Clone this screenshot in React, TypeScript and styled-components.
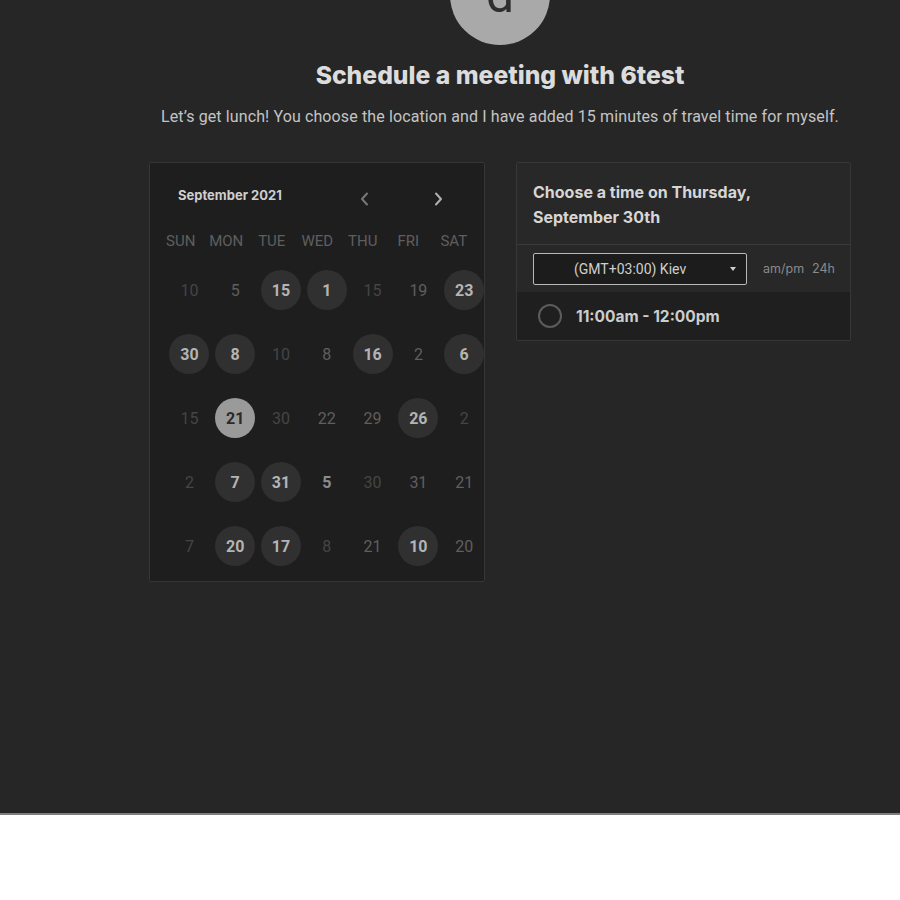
import React from "react";
import styled, { createGlobalStyle } from "styled-components";

const Global = createGlobalStyle`
  html, body { margin: 0; padding: 0; background: #ffffff; }
  body { font-family: Roboto, "Liberation Sans", sans-serif; }
  * { box-sizing: border-box; }
`;

const Page = styled.div`
  height: 815px;
  background: #262626;
  border-bottom: 2px solid #7d7d7d;
  overflow: hidden;
  padding-left: 100px;
  display: flex;
  flex-direction: column;
  align-items: center;
`;

const Avatar = styled.div`
  width: 100px;
  height: 100px;
  margin-top: -55px;
  border-radius: 50%;
  background: #a9a9a9;
  color: #2e2e2e;
  font-family: Roboto, "Liberation Sans", sans-serif;
  font-size: 50px;
  line-height: 100px;
  text-align: center;
  flex-shrink: 0;
`;

const Title = styled.h1`
  margin: 15px 0 0;
  font-family: Inter, "Liberation Sans", sans-serif;
  font-weight: 800;
  font-size: 24.7px;
  line-height: 30px;
  color: #dcdcdc;
`;

const Subtitle = styled.p`
  margin: 17px 0 0;
  font-size: 16px;
  letter-spacing: 0.12px;
  line-height: 20px;
  color: #c4c4c4;
`;

const Panels = styled.div`
  margin-top: 35px;
  display: flex;
  gap: 31px;
  align-items: flex-start;
`;

const Calendar = styled.div`
  width: 336px;
  height: 420px;
  background: #1e1e1e;
  border: 1px solid #363636;
  border-radius: 2px;
  overflow: hidden;
`;

const CalHeader = styled.div`
  display: flex;
  align-items: center;
  height: 20px;
  margin-top: 22px;
  padding-left: 28px;
`;

const Month = styled.div`
  font-family: Inter, "Liberation Sans", sans-serif;
  font-weight: 700;
  font-size: 13px;
  color: #cfcfcf;
  width: 176px;
`;

const NavBtn = styled.button<{ $dim?: boolean }>`
  background: none;
  border: none;
  padding: 0;
  margin-top: 8px;
  width: 14px;
  height: 16px;
  display: flex;
  align-items: center;
  justify-content: center;
  color: ${(p) => (p.$dim ? "#777" : "#b0b0b0")};
  margin-left: ${(p) => (p.$dim ? "3px" : "60px")};
`;

const WeekRow = styled.div`
  display: grid;
  grid-template-columns: repeat(7, 45.5px);
  padding-left: 8px;
  margin-top: 26px;
  height: 20px;
`;

const WeekDay = styled.div`
  text-align: center;
  font-size: 15px;
  line-height: 20px;
  color: #5e5e5e;
`;

const DaysGrid = styled.div`
  display: grid;
  grid-template-columns: repeat(7, 45.8px);
  grid-auto-rows: 64px;
  padding-left: 16.5px;
  margin-top: 7px;
`;

const DayCell = styled.div`
  display: flex;
  align-items: center;
  justify-content: center;
`;

type Kind = "dim" | "mid" | "strong" | "avail" | "sel";

const Day = styled.div<{ $k: Kind }>`
  width: 40px;
  height: 40px;
  border-radius: 50%;
  display: flex;
  align-items: center;
  justify-content: center;
  font-size: 16px;
  font-weight: ${(p) => (p.$k === "avail" || p.$k === "sel" || p.$k === "strong" ? 700 : 400)};
  background: ${(p) => (p.$k === "avail" ? "#303030" : p.$k === "sel" ? "#9a9a9a" : "transparent")};
  color: ${(p) =>
    p.$k === "dim"
      ? "#454545"
      : p.$k === "mid"
      ? "#5f5f5f"
      : p.$k === "strong"
      ? "#8c8c8c"
      : p.$k === "sel"
      ? "#2a2a2a"
      : "#b4b4b4"};
`;

const TimePanel = styled.div`
  width: 335px;
  background: #282828;
  border: 1px solid #373737;
  border-radius: 2px;
  overflow: hidden;
`;

const TimeHeader = styled.div`
  padding: 17px 16px 14px;
  font-family: Inter, "Liberation Sans", sans-serif;
  font-weight: 700;
  font-size: 16px;
  line-height: 25px;
  color: #d6d6d6;
  border-bottom: 1px solid #3a3a3a;
`;

const ZoneRow = styled.div`
  display: flex;
  align-items: center;
  height: 47px;
  padding-left: 16px;
  gap: 16px;
`;

const Select = styled.div`
  width: 214px;
  height: 32px;
  border: 1px solid #b8b8b8;
  border-radius: 2px;
  background: #1c1c1c;
  display: flex;
  align-items: center;
  padding-left: 40px;
  padding-right: 10px;
  font-size: 14px;
  color: #cfcfcf;
`;

const SelectText = styled.span`
  flex: 1;
`;

const Caret = styled.span`
  width: 0;
  height: 0;
  border-left: 3.5px solid transparent;
  border-right: 3.5px solid transparent;
  border-top: 4px solid #cfcfcf;
`;

const Format = styled.div`
  font-family: Inter, "Liberation Sans", sans-serif;
  font-size: 12.5px;
  color: #8a8a8a;
  display: flex;
  gap: 8px;
`;

const SlotRow = styled.div`
  display: flex;
  align-items: center;
  height: 48px;
  background: #1f1f1f;
  padding-left: 21px;
  gap: 14px;
`;

const Radio = styled.div`
  width: 24px;
  height: 24px;
  border-radius: 50%;
  border: 2px solid #5c5c5c;
`;

const SlotText = styled.div`
  font-family: Inter, "Liberation Sans", sans-serif;
  font-weight: 700;
  font-size: 15.5px;
  color: #cdcdcd;
`;

const weekdays = ["SUN", "MON", "TUE", "WED", "THU", "FRI", "SAT"];

const days: [string, Kind][] = [
  ["10", "dim"], ["5", "mid"], ["15", "avail"], ["1", "avail"], ["15", "dim"], ["19", "mid"], ["23", "avail"],
  ["30", "avail"], ["8", "avail"], ["10", "dim"], ["8", "mid"], ["16", "avail"], ["2", "mid"], ["6", "avail"],
  ["15", "dim"], ["21", "sel"], ["30", "dim"], ["22", "mid"], ["29", "mid"], ["26", "avail"], ["2", "dim"],
  ["2", "dim"], ["7", "avail"], ["31", "avail"], ["5", "strong"], ["30", "dim"], ["31", "mid"], ["21", "mid"],
  ["7", "dim"], ["20", "avail"], ["17", "avail"], ["8", "dim"], ["21", "mid"], ["10", "avail"], ["20", "mid"],
];

const Chevron = ({ left }: { left?: boolean }) => (
  <svg width="9" height="14" viewBox="0 0 9 14" fill="none">
    <path
      d={left ? "M7 1.5 L2 7 L7 12.5" : "M2 1.5 L7 7 L2 12.5"}
      stroke="currentColor"
      strokeWidth="2"
      strokeLinecap="round"
      strokeLinejoin="round"
    />
  </svg>
);

export default function App() {
  return (
    <>
      <Global />
      <Page>
        <Avatar>d</Avatar>
        <Title>Schedule a meeting with 6test</Title>
        <Subtitle>
          Let’s get lunch! You choose the location and I have added 15 minutes of travel time for myself.
        </Subtitle>
        <Panels>
          <Calendar>
            <CalHeader>
              <Month>September 2021</Month>
              <NavBtn $dim>
                <Chevron left />
              </NavBtn>
              <NavBtn>
                <Chevron />
              </NavBtn>
            </CalHeader>
            <WeekRow>
              {weekdays.map((d) => (
                <WeekDay key={d}>{d}</WeekDay>
              ))}
            </WeekRow>
            <DaysGrid>
              {days.map(([n, k], i) => (
                <DayCell key={i}>
                  <Day $k={k}>{n}</Day>
                </DayCell>
              ))}
            </DaysGrid>
          </Calendar>
          <TimePanel>
            <TimeHeader>
              Choose a time on Thursday,
              <br />
              September 30th
            </TimeHeader>
            <ZoneRow>
              <Select>
                <SelectText>(GMT+03:00) Kiev</SelectText>
                <Caret />
              </Select>
              <Format>
                <span>am/pm</span>
                <span>24h</span>
              </Format>
            </ZoneRow>
            <SlotRow>
              <Radio />
              <SlotText>11:00am - 12:00pm</SlotText>
            </SlotRow>
          </TimePanel>
        </Panels>
      </Page>
    </>
  );
}
